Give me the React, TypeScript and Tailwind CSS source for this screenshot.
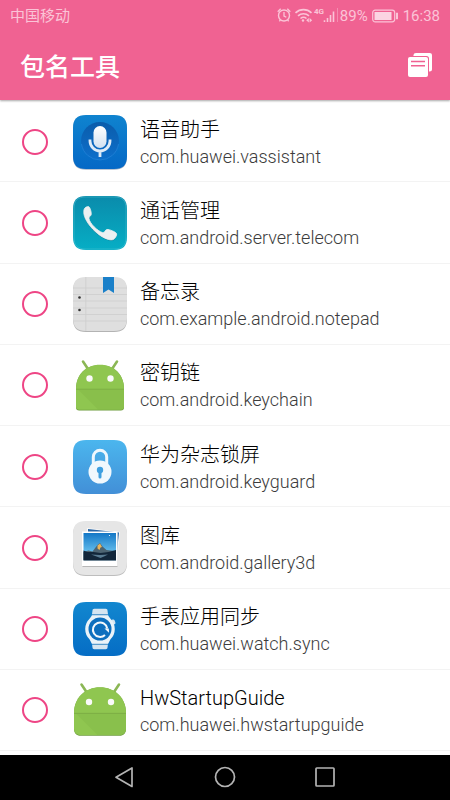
import React from "react";

const tile = "M14 1h28c9 0 13 4 13 13v28c0 9-4 13-13 13H14C5 55 1 51 1 42V14C1 5 5 1 14 1Z";

function IconFrame({ children }: { children: React.ReactNode }) {
  return (
    <svg viewBox="0 0 56 56" className="size-14 shrink-0" aria-hidden="true">
      {children}
    </svg>
  );
}

function VoiceIcon() {
  return (
    <IconFrame>
      <defs>
        <linearGradient id="voiceBg" x1="0" y1="0" x2="0" y2="1">
          <stop offset="0" stopColor="#0f83cf" />
          <stop offset="1" stopColor="#0568c6" />
        </linearGradient>
        <linearGradient id="voiceDisc" x1="0" y1="0" x2="0" y2="1">
          <stop offset="0" stopColor="#0a5cab" />
          <stop offset="1" stopColor="#0d6fcb" />
        </linearGradient>
        <linearGradient id="voiceMic" x1="0" y1="0" x2="0" y2="1">
          <stop offset="0" stopColor="#ffffff" />
          <stop offset="1" stopColor="#d3e1f0" />
        </linearGradient>
      </defs>
      <path d={tile} transform="translate(0 .8)" fill="#7f93ab" opacity=".7" />
      <path d={tile} fill="url(#voiceBg)" />
      <circle cx="28" cy="27" r="19" fill="url(#voiceDisc)" />
      <path d="M9.500 30a18.700 18.700 0 0 0 37 0" fill="none" stroke="#2b8bdc" strokeWidth=".8" opacity=".7" />
      <path d="M18 25.500v1.500a10 10 0 0 0 20 0v-1.500M28 37v6" fill="none" stroke="#dfebf7" strokeWidth="2.800" />
      <rect x="21.500" y="12" width="13" height="22" rx="6.500" fill="url(#voiceMic)" />
    </IconFrame>
  );
}

function PhoneIcon() {
  return (
    <IconFrame>
      <defs>
        <linearGradient id="phoneBg" x1="0" y1="0" x2="0" y2="1">
          <stop offset="0" stopColor="#0a8bab" />
          <stop offset="1" stopColor="#06aec5" />
        </linearGradient>
      </defs>
      <path d={tile} fill="url(#phoneBg)" />
      <path d="M14 2h28c8.500 0 12 3.500 12 12v28c0 8.500-3.500 12-12 12H14C5.500 54 2 50.500 2 42V14C2 5.500 5.500 2 14 2Z" fill="none" stroke="#5bc6d5" strokeWidth=".7" opacity=".6" />
      <g transform="translate(0 .8)" fill="#07677e" opacity=".7">
        <path d="M12.500 13.500C13.500 12 15.700 11.300 16.800 11.700C18 12.200 19.400 17 19.300 19.200C19.200 21 16.700 21.600 17 23.600C17.700 28.500 25.500 36 30.500 37.600C32.500 38.200 33.200 34.700 35 34.500C37.500 34.200 43.600 37 44.500 38.500C45.300 40 43.200 43.500 41.500 44.400C38.500 46 31.500 43.500 25.500 38.500C18.500 32.700 13.300 25.500 12 19.500C11.600 17.200 11.700 15 12.500 13.500Z" />
      </g>
      <path d="M12.500 13.500C13.500 12 15.700 11.300 16.800 11.700C18 12.200 19.400 17 19.300 19.200C19.200 21 16.700 21.600 17 23.600C17.700 28.500 25.500 36 30.500 37.600C32.500 38.200 33.200 34.700 35 34.500C37.500 34.200 43.600 37 44.500 38.500C45.300 40 43.200 43.500 41.500 44.400C38.500 46 31.500 43.500 25.500 38.500C18.500 32.700 13.300 25.500 12 19.500C11.600 17.200 11.700 15 12.500 13.500Z" fill="#edf0f1" stroke="#edf0f1" strokeWidth=".8" />
    </IconFrame>
  );
}

function NotepadIcon() {
  return (
    <IconFrame>
      <path d={tile} transform="translate(0 1)" fill="#b3b3b3" />
      <path d={tile} fill="#dfdfdf" />
      <path d="M1 12h54M1 18.500h54M1 25h54M1 32h54M1 38.500h54M1 45h54M13.800 1v54" stroke="#cdcdcd" strokeWidth=".8" />
      <path d="M31 1h11v16l-5.500-3.500L31 17Z" fill="#1a80c9" />
      <circle cx="7.500" cy="21.500" r="1.300" fill="#333" />
      <circle cx="7.500" cy="34" r="1.300" fill="#333" />
    </IconFrame>
  );
}

function AndroidIcon({ wide = false }: { wide?: boolean }) {
  return (
    <IconFrame>
      {wide ? (
        <>
          <path d="M9.500 2.500l5 7.500M47 2.500l-5 7.500" stroke="#8bb755" strokeWidth="2.600" strokeLinecap="round" />
          <path d="M2 31C2 16 13 5.500 28 5.500S54 16 54 31v16c0 4-2.500 6.800-6.500 6.800h-39C4.500 53.800 2 51 2 47Z" fill="#6d9c3c" />
          <path d="M2 31C2 16 13 5.200 28 5.200S54 16 54 31v15.500c0 4-2.500 6.500-6.500 6.500h-39C4.500 53 2 50.500 2 46.500Z" fill="#8fc650" />
          <path d="M4 31.500h50v15c0 4-2.500 6.500-6.500 6.500H25.500Z" fill="#83b746" opacity=".45" />
          <path d="M2 31.400h52" stroke="#78a943" strokeWidth=".8" />
          <circle cx="17" cy="20" r="3.200" fill="#fafafa" />
          <circle cx="39" cy="20" r="3.200" fill="#fafafa" />
        </>
      ) : (
        <>
          <path d="M11 4.500l5 7.500M45 4.500l-5 7.500" stroke="#8bb755" strokeWidth="2.600" strokeLinecap="round" />
          <path d="M4 32C4 17.500 14 8 28 8s24 9.500 24 24v18.200c0 2.200-1 3.300-3.200 3.300H7.200C5 53.500 4 52.400 4 50.200Z" fill="#6d9c3c" />
          <path d="M4 32C4 17.500 14 7.700 28 7.700S52 17.500 52 32v17.500c0 2.200-1 3.300-3.200 3.300H7.200C5 52.800 4 51.700 4 49.500Z" fill="#8fc650" />
          <path d="M6 32.500h46v17c0 2.200-1 3.300-3.200 3.300H26.300Z" fill="#83b746" opacity=".5" />
          <path d="M4 32.200h48" stroke="#78a943" strokeWidth=".8" />
          <circle cx="17.500" cy="21.500" r="3.200" fill="#fafafa" />
          <circle cx="38.500" cy="21.500" r="3.200" fill="#fafafa" />
        </>
      )}
    </IconFrame>
  );
}

function LockIcon() {
  return (
    <IconFrame>
      <defs>
        <linearGradient id="lockBg" x1="0" y1="0" x2="0" y2="1">
          <stop offset="0" stopColor="#4bb6ee" />
          <stop offset="1" stopColor="#428fd7" />
        </linearGradient>
      </defs>
      <path d={tile} fill="url(#lockBg)" />
      <path d="M21.300 26v-8a6.700 6.700 0 0 1 13.400 0v8" fill="none" stroke="#eef7fd" strokeWidth="3" />
      <circle cx="28" cy="33" r="11.500" fill="#f1f8fd" />
      <circle cx="28" cy="31" r="3.200" fill="#3f9fe0" />
      <path d="M26.500 31h3v7a1.500 1.500 0 0 1-3 0Z" fill="#3f9fe0" />
    </IconFrame>
  );
}

function GalleryIcon() {
  return (
    <IconFrame>
      <defs>
        <linearGradient id="sky" x1="0" y1="0" x2="0" y2="1">
          <stop offset="0" stopColor="#1377c6" />
          <stop offset=".65" stopColor="#5fb9ea" />
          <stop offset="1" stopColor="#a5d3e6" />
        </linearGradient>
      </defs>
      <path d={tile} transform="translate(0 1)" fill="#bdbdbd" />
      <path d={tile} fill="#e6e6e6" />
      <path d="M15 8l33 4-3 29-33-4Z" fill="#f8f8f8" />
      <path d="M16 9l31 3.500-2 19h-29Z" fill="#2765a5" />
      <path d="M10.500 12h35v35h-35Z" fill="#b7b7b7" />
      <path d="M10 11.500h35.500V46H10Z" fill="#fff" />
      <path d="M11.500 13h32.500v27.500H11.500Z" fill="url(#sky)" />
      <path d="M11.500 32l5-1.500 4 1 3-4 2.500-3 2-1.500 2.500 3.500 4 3.500 9 1v9H11.500Z" fill="#4d6472" />
      <path d="M25.500 25.500l2.500-2 2 3.500-1.500.5-1 2.500-2-1.500Z" fill="#e9b55c" />
      <path d="M11.500 30.500l4 1.500h6l7 1 8-1 7.500-2v10.500H11.500Z" fill="#12263a" />
      <path d="M19 34.500l9 .5 8-.5-4 2-3.500 1.500-4-1.500Z" fill="#587a91" />
      <circle cx="37.500" cy="15.500" r=".6" fill="#fff" />
    </IconFrame>
  );
}

function WatchIcon() {
  return (
    <IconFrame>
      <defs>
        <linearGradient id="watchBg" x1="0" y1="0" x2="0" y2="1">
          <stop offset="0" stopColor="#1287cf" />
          <stop offset="1" stopColor="#056dc5" />
        </linearGradient>
      </defs>
      <path d={tile} fill="url(#watchBg)" />
      <path d="M20.500 9.500c0-1 .7-1.700 1.700-1.700h11.600c1 0 1.700.7 1.700 1.700l.8 6h-16.600Z" fill="#d5e5f1" />
      <path d="M20.500 46.500c0 1 .7 1.700 1.700 1.700h11.600c1 0 1.700-.7 1.700-1.700l.8-6h-16.600Z" fill="#d5e5f1" />
      <rect x="39.500" y="18.500" width="3.600" height="5" rx="1.500" transform="rotate(-24 41.300 21)" fill="#d5e5f1" />
      <path d="M20 14.500h16l2.500 3.200a14.500 14.500 0 0 1 0 20.600L36 43H20l-2.500-4.700a14.500 14.500 0 0 1 0-20.600Z" fill="#eaf3f9" />
      <path d="M20 13.700h16M20 43.300h16" stroke="#3d8bc6" strokeWidth="1" />
      <circle cx="28" cy="28" r="11.500" fill="#0d6fbe" />
      <path d="M33 34a7.200 7.200 0 1 1 2.200-6.500" fill="none" stroke="#f3f8fc" strokeWidth="2" />
      <path d="M32.500 27.500h4.300l.2 4.300Z" fill="#f3f8fc" />
    </IconFrame>
  );
}

const apps: { name: string; pkg: string; icon: React.ReactNode }[] = [
  { name: "语音助手", pkg: "com.huawei.vassistant", icon: <VoiceIcon /> },
  { name: "通话管理", pkg: "com.android.server.telecom", icon: <PhoneIcon /> },
  { name: "备忘录", pkg: "com.example.android.notepad", icon: <NotepadIcon /> },
  { name: "密钥链", pkg: "com.android.keychain", icon: <AndroidIcon /> },
  { name: "华为杂志锁屏", pkg: "com.android.keyguard", icon: <LockIcon /> },
  { name: "图库", pkg: "com.android.gallery3d", icon: <GalleryIcon /> },
  { name: "手表应用同步", pkg: "com.huawei.watch.sync", icon: <WatchIcon /> },
  { name: "HwStartupGuide", pkg: "com.huawei.hwstartupguide", icon: <AndroidIcon wide /> },
];

function StatusBar() {
  return (
    <div className="flex h-8 items-center justify-between px-2.5 text-[15px] leading-5 text-[#fbc4d7]">
      <span>中国移动</span>
      <div className="flex items-center">
        <svg viewBox="0 0 64 20" className="h-5 w-16" fill="none" stroke="#fbc4d7" aria-hidden="true">
          <circle cx="8" cy="9.500" r="5.500" strokeWidth="1.400" />
          <path d="M8 6v4l2.300 1.300M1.700 5.800l3-3M14.300 5.800l-3-3M4.500 14l-1.200 1.300M11.500 14l1.200 1.300" strokeWidth="1.300" />
          <path d="M19.500 6.800c4.500-4.200 11.500-4.200 16 0M22 9.800c3.200-2.800 7.800-2.800 11 0M24.500 12.500c1.800-1.500 4.200-1.500 6 0" strokeWidth="1.600" />
          <circle cx="27" cy="14.500" r="1.200" fill="#fbc4d7" stroke="none" />
          <path d="M32.800 12l-2.600 2.300 2.600 2.300ZM33.600 12l2.600 2.300-2.600 2.300Z" fill="#fbc4d7" stroke="none" />
          <path d="M48.500 16v-1.700M51.500 16v-4M54.500 16V9M57.500 16V5.500" strokeWidth="1.600" />
          <path d="M61.500 16V2" strokeWidth="1" opacity=".45" />
          <text x="38" y="8" fontSize="8" fontWeight="700" fill="#fbc4d7" stroke="none">4G</text>
        </svg>
        <span>89%</span>
        <svg viewBox="0 0 27 14" className="mx-1 h-3.5 w-[27px]" aria-hidden="true">
          <rect x=".7" y="1.200" width="22" height="11.600" rx="2.500" fill="none" stroke="#fbc4d7" strokeWidth="1.200" />
          <rect x="2.500" y="3" width="17" height="8" fill="#fbd4e2" />
          <path d="M24.500 4h1v6h-1Z" fill="#fbc4d7" stroke="#fbc4d7" />
        </svg>
        <span>16:38</span>
      </div>
    </div>
  );
}

export default function App() {
  return (
    <div className="flex min-h-screen flex-col bg-white font-[Roboto,'Noto_Sans_CJK_SC',sans-serif]">
      <header className="relative bg-[#f06292] shadow-[0_1px_2px_rgba(0,0,0,0.35)]">
        <StatusBar />
        <div className="flex h-[68px] items-center justify-between pr-4 pl-5">
          <h1 className="pt-1 text-[25px] leading-8 font-medium text-white">包名工具</h1>
          <button type="button" aria-label="复制" className="size-7">
            <svg viewBox="0 0 28 28" className="size-7" aria-hidden="true">
              <path d="M7.500 6.500V3.500C7.500 1.800 8.500 1 10 1h13.500C25.200 1 26 1.800 26 3.500V17c0 1.700-.8 2.500-2.500 2.500H22" fill="#fff" />
              <rect x="1" y="4" width="22" height="22" rx="2.500" fill="#f06292" />
              <rect x="2" y="5" width="20" height="20" rx="2" fill="#fff" />
              <path d="M5 9.500h14M5 13.700h14" stroke="#f06292" strokeWidth="1.400" />
            </svg>
          </button>
        </div>
      </header>

      <ul className="grid flex-1 auto-rows-fr pt-px pb-1">
        {apps.map((app, i) => (
          <li key={app.pkg} className="border-b border-[#f3f3f3]">
            <label htmlFor={`app-${i}`} className="flex h-full items-center pt-px pr-4 pl-[22px]">
              <input
                id={`app-${i}`}
                type="checkbox"
                className="size-[26px] shrink-0 appearance-none rounded-full border-2 border-[#ee4585] checked:bg-[#ee4585]"
              />
              <span className="ml-6 flex">{app.icon}</span>
              <span className="ml-3 flex flex-col pt-0.5 font-light">
                <span className="text-[20px] leading-7 text-black">{app.name}</span>
                <span className="text-[18px] leading-[26px] text-[#3c3c3c]">{app.pkg}</span>
              </span>
            </label>
          </li>
        ))}
      </ul>

      <nav className="flex h-[45px] items-center justify-center gap-[72px] bg-black">
        <button type="button" aria-label="返回" className="size-7">
          <svg viewBox="0 0 28 28" className="size-7" fill="none" stroke="#b4b4b4" strokeWidth="1.700" aria-hidden="true">
            <path d="M21 4v18.500L5 13.200Z" strokeLinejoin="round" />
          </svg>
        </button>
        <button type="button" aria-label="主屏幕" className="size-7">
          <svg viewBox="0 0 28 28" className="size-7" fill="none" stroke="#b4b4b4" strokeWidth="1.700" aria-hidden="true">
            <circle cx="14" cy="13" r="9.500" />
          </svg>
        </button>
        <button type="button" aria-label="最近任务" className="size-7">
          <svg viewBox="0 0 28 28" className="size-7" fill="none" stroke="#b4b4b4" strokeWidth="1.700" aria-hidden="true">
            <rect x="5" y="4" width="18" height="18" rx=".8" />
          </svg>
        </button>
      </nav>
    </div>
  );
}
